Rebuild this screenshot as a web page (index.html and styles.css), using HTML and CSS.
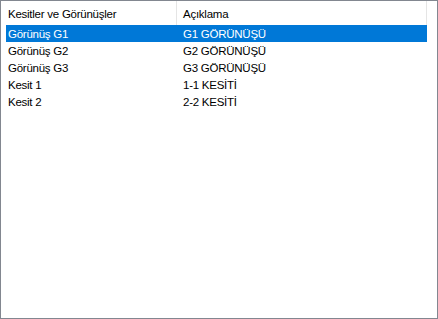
FILE: index.html
```html
<!DOCTYPE html>
<html>
<head>
<meta charset="utf-8">
<link rel="stylesheet" href="styles.css">
</head>
<body>
<div class="list">
  <div class="header">
    <div class="hcell c1">Kesitler ve Görünüşler</div>
    <div class="hcell c2">Açıklama</div>
  </div>
  <div class="rows">
    <div class="row selected"><span class="cell c1">Görünüş G1</span><span class="cell c2">G1 GÖRÜNÜŞÜ</span></div>
    <div class="row"><span class="cell c1">Görünüş G2</span><span class="cell c2">G2 GÖRÜNÜŞÜ</span></div>
    <div class="row"><span class="cell c1">Görünüş G3</span><span class="cell c2">G3 GÖRÜNÜŞÜ</span></div>
    <div class="row"><span class="cell c1">Kesit 1</span><span class="cell c2">1-1 KESİTİ</span></div>
    <div class="row"><span class="cell c1">Kesit 2</span><span class="cell c2">2-2 KESİTİ</span></div>
  </div>
</div>
</body>
</html>
```
FILE: styles.css
```css
* { box-sizing: border-box; }
html, body { margin: 0; padding: 0; background: #fff; }
body {
  font-family: "Liberation Sans", Arial, sans-serif;
  font-size: 11.5px;
  letter-spacing: -0.25px;
  color: #000;
}
.list {
  width: 438px;
  height: 319px;
  border: 1px solid #828790;
  background: #fff;
}
.header {
  display: flex;
  height: 24px;
  padding-left: 5px;
}
.hcell {
  display: flex;
  align-items: center;
  padding-left: 2px;
  padding-top: 1px;
  border-right: 1px solid #e5e5e5;
}
.header .c1 { width: 171px; }
.header .c2 { width: 250px; padding-left: 6px; }
.rows {
  padding-left: 5px;
}
.row {
  display: flex;
  width: 421px;
  height: 17px;
  align-items: center;
  padding-top: 1px;
}
.row.selected {
  background: #0078d7;
  color: #fff;
}
.cell.c1 { width: 171px; padding-left: 2px; }
.cell.c2 { padding-left: 6px; }
```
